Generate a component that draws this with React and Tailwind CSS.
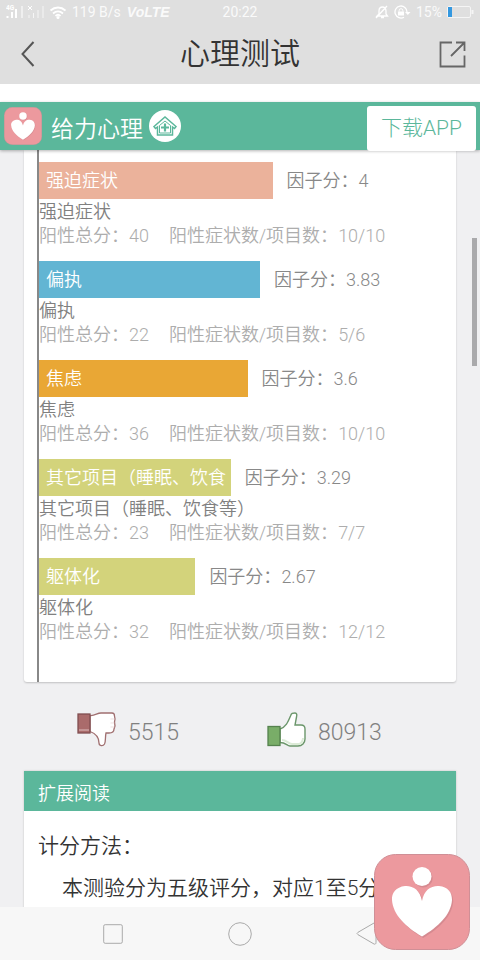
import React from "react";

const factors = [
  { name: "强迫症状", score: "4", total: 40, ratio: "10/10", bar: "w-[56%] bg-[#ebb29b]" },
  { name: "偏执", score: "3.83", total: 22, ratio: "5/6", bar: "w-[53%] bg-[#62b5d3]" },
  { name: "焦虑", score: "3.6", total: 36, ratio: "10/10", bar: "w-1/2 bg-[#e9a735]" },
  { name: "其它项目（睡眠、饮食等）", score: "3.29", total: 23, ratio: "7/7", bar: "w-[46%] bg-[#d3d37b]", barName: "其它项目（睡眠、饮食" },
  { name: "躯体化", score: "2.67", total: 32, ratio: "12/12", bar: "w-3/8 bg-[#d3d37b]" },
];

function HeartLogo({ className }) {
  return (
    <svg viewBox="0 0 96 96" className={className} aria-hidden="true">
      <rect x="0.5" y="0.5" width="95" height="95" rx="21" fill="#ec999e" stroke="#cf8f96" />
      <g fill="#c57e86" opacity=".55" transform="translate(1.2 1.4)">
        <circle cx="48" cy="22.500" r="9.500" />
        <path d="M48 47C46 36 39 31.500 31 32C22 33 17.500 39 18 46C19 61 32 73 48 82.500C64 73 77 61 78 46C78 38 74 33 65 32C57 31.500 50 36 48 47Z" />
      </g>
      <g fill="#fff">
        <circle cx="48" cy="22.500" r="9.500" />
        <path d="M48 47C46 36 39 31.500 31 32C22 33 17.500 39 18 46C19 61 32 73 48 82.500C64 73 77 61 78 46C78 38 74 33 65 32C57 31.500 50 36 48 47Z" />
      </g>
    </svg>
  );
}

function SignalIcons() {
  return (
    <svg viewBox="0 0 60 16" className="h-4 w-[60px]" fill="none" stroke="#fff" aria-hidden="true">
      <text x="0" y="6" fontSize="6.500" fill="#fff" stroke="none" fontWeight="700">4G</text>
      <path d="M1.500 14v-2M6 14V8M10 14V5" strokeWidth="2" />
      <path d="M16 14V2" strokeWidth="1" />
      <path d="M22 2l4 4m0-4l-4 4" strokeWidth="1" />
      <path d="M23 14v-3M27.500 14V9M32 14V6M37 14V2" strokeWidth="1" opacity=".7" />
      <path d="M44.500 6.500C49 2.500 55 2.500 59.500 6.500M47 9.500C50 7 54 7 57 9.500M49.500 12C51 10.500 53 10.500 54.500 12" strokeWidth="1.800" />
      <circle cx="52" cy="13.500" r="1.500" fill="#fff" stroke="none" />
    </svg>
  );
}

function StatusBar() {
  return (
    <div className="grid h-6 grid-cols-[1fr_auto_1fr] items-center px-[6px] text-sm font-normal text-[#fafafa]">
      <div className="flex items-center gap-[6px]">
        <SignalIcons />
        <span>119 B/s</span>
        <span className="font-['Liberation_Sans',sans-serif] font-bold italic">VoLTE</span>
      </div>
      <span>20:22</span>
      <div className="flex items-center justify-end gap-[5px]">
        <svg viewBox="0 0 14 14" className="h-[14px] w-[14px]" fill="none" stroke="#fff" strokeWidth="1.300" aria-hidden="true">
          <path d="M2 11h10.500L11 9V6C11 3.500 9.500 2 7.500 2S4 3.500 4 6v3zM6 12.500h3M1 13L12 1" />
        </svg>
        <svg viewBox="0 0 17 14" className="h-[14px] w-[17px]" fill="none" stroke="#fff" strokeWidth="1.300" aria-hidden="true">
          <path d="M10 12.200A6 6 0 1 1 13 7" />
          <path d="M11 7h5.500l-2.700 3z" fill="#fff" stroke="none" />
          <rect x="4" y="6.500" width="6" height="4" fill="#fff" stroke="none" />
          <path d="M5.200 6.500V5.500a1.800 1.800 0 0 1 3.600 0v1" strokeWidth="1" />
        </svg>
        <span>15%</span>
        <svg viewBox="0 0 27 12" className="h-3 w-[27px]" aria-hidden="true">
          <rect x="0.500" y="0.500" width="23" height="11" rx="1.500" fill="none" stroke="#f5f5f5" />
          <rect x="1" y="1" width="4" height="10" fill="#3498e0" />
          <rect x="24.500" y="4" width="2" height="4" fill="#f5f5f5" />
        </svg>
      </div>
    </div>
  );
}

function TitleBar() {
  return (
    <div className="flex h-[60px] items-center justify-between px-[14px] text-[#333]">
      <button type="button" aria-label="返回" className="flex h-10 w-[27px] items-center justify-center">
        <svg viewBox="0 0 14 26" className="h-[26px] w-[14px]" fill="none" stroke="#555" strokeWidth="2" aria-hidden="true">
          <path d="M12.500 1L1.500 13L12.500 25" />
        </svg>
      </button>
      <h1 className="text-[30px] leading-10 font-[350]">心理测试</h1>
      <button type="button" aria-label="分享" className="flex h-10 w-[27px] items-center justify-center">
        <svg viewBox="0 0 27 27" className="h-[27px] w-[27px]" fill="none" stroke="#666" strokeWidth="1.800" aria-hidden="true">
          <path d="M13 1.500H1.500V25.500H25.500V14.500M17 1.500H25.500V10M12 15L25 2" />
        </svg>
      </button>
    </div>
  );
}

function AppBanner() {
  return (
    <div className="relative flex h-12 items-start justify-between bg-[#5bb79b] pr-1 pl-1 shadow-[0_1px_3px_rgba(0,0,0,0.3)]">
      <div className="flex h-12 items-center">
        <HeartLogo className="h-[38px] w-[38px]" />
        <span className="pt-2 pl-[9px] text-[23px] leading-8 text-white">给力心理</span>
        <a href="#home" aria-label="首页" className="ml-[6px]">
          <svg viewBox="0 0 32 32" className="h-8 w-8" fill="none" stroke="#5bb79b" aria-hidden="true">
            <circle cx="16" cy="16" r="16" fill="#fff" stroke="none" />
            <path d="M5 16.500L16 7L27 16.500L25.500 18.500L23.500 17V25H8.500V17L6.500 18.500Z" strokeWidth="1.500" />
            <path d="M10.500 15.500V23H21.500V15.500L16 11Z" strokeWidth="1" />
            <path d="M16 13.500V21.500M12 17.500H20" strokeWidth="2.200" />
          </svg>
        </a>
      </div>
      <a href="#download" className="mt-1 rounded-[3px] bg-white px-[14px] text-[21px] leading-[45px] font-light text-[#5bb79b]">
        下载APP
      </a>
    </div>
  );
}

function FactorRow({ factor }) {
  return (
    <li className="pb-[13px]">
      <div className="flex items-center pb-px">
        <div className={`h-[37px] overflow-hidden pl-[7px] text-lg leading-[37px] whitespace-nowrap text-white ${factor.bar}`}>
          {factor.barName || factor.name}
        </div>
        <span className="pl-[14px] text-lg leading-[37px] text-[#888]">因子分：{factor.score}</span>
      </div>
      <p className="text-lg leading-6 text-[#808080]">{factor.name}</p>
      <p className="flex gap-5 text-lg leading-6 text-[#adadad]">
        <span>阳性总分：{factor.total}</span>
        <span>阳性症状数/项目数：{factor.ratio}</span>
      </p>
    </li>
  );
}

function Votes() {
  return (
    <div className="grid grid-cols-[190px_1fr] pt-[23px] pb-[18px] pl-[77px] text-[23px] leading-10 text-[#808080]">
      <button type="button" className="flex items-center gap-3">
        <svg viewBox="0 0 39 35" className="h-[35px] w-[39px]" aria-hidden="true">
          <path d="M13 3.500C18 4 20 1 24 1H35C37 1 37.500 2 37.500 4L38 7L37.500 10L38 14L37 17C37 20 35 21 32 21H29C28 25 29 29 27.500 32C26 34.500 22 34 22 31C22 26 20 22 13 19.500Z" fill="#fff" stroke="#a06f70" strokeWidth="1.300" />
          <path d="M33.500 7H37.500M33.500 11H37.500M33.500 15H37.500" stroke="#e6d2d2" strokeWidth=".7" />
          <rect x="1" y="2" width="12" height="19" fill="#aa6b6b" stroke="#804e50" strokeWidth="1.300" />
          <path d="M2 18H12" stroke="#c49494" strokeWidth="2" />
        </svg>
        <span className="pt-2">5515</span>
      </button>
      <button type="button" className="flex items-center gap-3">
        <svg viewBox="0 0 39 35" className="h-[35px] w-[39px]" aria-hidden="true">
          <path d="M13 17C19 15 21 10 23.500 4C24.500 1 25.500 1 28 1C30 1 30 3 29.500 5L28 13H34C37 13 38 15 38 17V27C38 31 35 34 31 34H23C20 34 19 30.500 13 30.500Z" fill="#fff" stroke="#6b966b" strokeWidth="1.400" />
          <path d="M15 28C20 28 21 32 25 32H32C34 32 36 29 36 26" fill="none" stroke="#dcebd7" strokeWidth="2" />
          <rect x="1" y="14.500" width="12" height="19" fill="#79ad68" stroke="#55824e" strokeWidth="1.300" />
        </svg>
        <span className="pt-2">80913</span>
      </button>
    </div>
  );
}

function NavBar() {
  return (
    <nav className="grid h-[53px] shrink-0 grid-cols-3 items-center bg-[#f7f7f7] px-[50px]">
      <button type="button" aria-label="最近任务" className="flex justify-center">
        <svg viewBox="0 0 20 20" className="h-5 w-5" fill="none" stroke="#aaa" aria-hidden="true">
          <rect x="0.700" y="0.700" width="18.600" height="18.600" rx="1.500" />
        </svg>
      </button>
      <button type="button" aria-label="主屏幕" className="flex justify-center">
        <svg viewBox="0 0 24 24" className="h-6 w-6" fill="none" stroke="#aaa" aria-hidden="true">
          <circle cx="12" cy="12" r="11.300" />
        </svg>
      </button>
      <button type="button" aria-label="后退" className="flex justify-center">
        <svg viewBox="0 0 21 23" className="h-[23px] w-[21px]" fill="none" stroke="#aaa" aria-hidden="true">
          <path d="M2 10.300L18 1C19.500 .5 20 1 20 2V20.500C20 22 19 22.500 18 22L2 12.700Q0 11.500 2 10.300Z" />
        </svg>
      </button>
    </nav>
  );
}

export default function App() {
  return (
    <div lang="zh-CN" className="relative flex h-screen flex-col overflow-hidden bg-[#f0f0f2] font-['Roboto','Noto_Sans_CJK_SC',sans-serif] font-[350]">
      <header className="shrink-0 bg-[#dfdfdf]">
        <StatusBar />
        <TitleBar />
      </header>
      <main className="min-h-0 flex-1 overflow-hidden">
        <div className="h-[18px] bg-white" />
        <AppBanner />
        <section className="mx-6 rounded-b-[3px] bg-white pl-[13px] shadow-[0_1px_2px_rgba(0,0,0,0.2)]">
          <ul className="border-l-2 border-[#888] pt-3 pb-[25px]">
            {factors.map((factor) => (
              <FactorRow key={factor.name} factor={factor} />
            ))}
          </ul>
        </section>
        <Votes />
        <section className="mx-6 bg-white shadow-[0_0_2px_rgba(0,0,0,0.2)]">
          <h2 className="bg-[#5bb79b] px-[14px] pt-[6px] text-lg leading-[34px] font-[350] text-white">扩展阅读</h2>
          <div className="h-60 overflow-hidden px-[14px] pt-[14px] text-[21px] text-[#333]">
            <p className="leading-[42px]">计分方法：</p>
            <p className="indent-6 leading-[42px] whitespace-nowrap">本测验分为五级评分，对应1至5分</p>
          </div>
        </section>
      </main>
      <NavBar />
      <div className="absolute top-[238px] right-[3px] h-32 w-[5px] bg-[#aaaaac]" />
      <button type="button" aria-label="给力心理" className="absolute right-[10px] bottom-[10px]">
        <HeartLogo className="h-24 w-24" />
      </button>
    </div>
  );
}
